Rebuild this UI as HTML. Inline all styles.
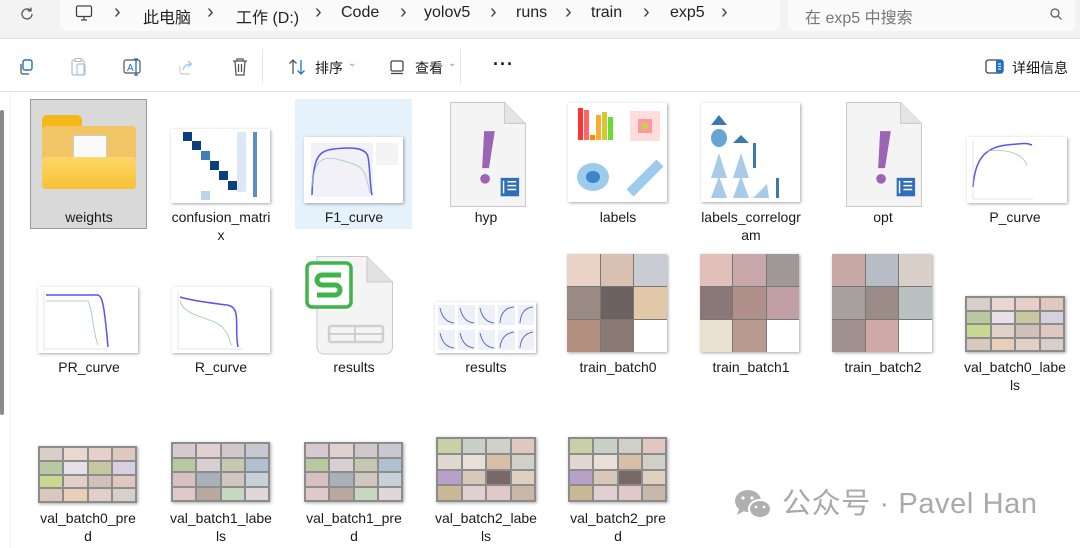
<!DOCTYPE html>
<html><head><meta charset="utf-8"><style>
*{margin:0;padding:0;box-sizing:border-box}
body{width:1080px;height:548px;overflow:hidden;background:#fff;font-family:"Liberation Sans","Noto Sans CJK SC",sans-serif;position:relative;color:#1a1a1a}
.a{position:absolute}
.hdr{left:0;top:0;width:1080px;height:39px;background:#f3f3f3;border-bottom:1px solid #e3e3e3}
.addr{left:60px;top:0;width:720px;height:31px;background:#fafafa;border-radius:0 0 6px 6px}
.srch{left:788px;top:0;width:287px;height:31px;background:#fafafa;border-radius:0 0 6px 6px}
.ht{top:4px;font-size:16px;color:#222}
.chev{top:1px;font-size:20px;color:#444}
.tb{left:0;top:40px;width:1080px;height:52px;background:#fff;border-bottom:1px solid #e3e3e3}
.lbl{font-size:14px;color:#1a1a1a;text-align:center;width:120px;line-height:18px}
.thumb{box-shadow:1px 1px 3px rgba(0,0,0,.35);background:#fff;overflow:hidden}
.g{display:grid;background:#8c8c8c;gap:2px;padding:2px}
.g span{display:block}
.wm{font-size:29px;color:#a9a9a9;left:782px;top:487px;letter-spacing:.6px;line-height:34px}
</style></head><body>
<div class="a hdr"></div>
<div class="a addr"></div>
<div class="a srch"></div>
<svg class="a" style="left:18px;top:5px" width="18" height="18" viewBox="0 0 18 18"><path d="M14 9a5 5 0 1 1-1.5-3.6M13 2.5v3.3H9.7" fill="none" stroke="#555" stroke-width="1.3"/></svg>
<svg class="a" style="left:74px;top:3px" width="20" height="20" viewBox="0 0 20 20"><rect x="2.5" y="3" width="15" height="10.5" rx="1.5" fill="none" stroke="#444" stroke-width="1.3"/><path d="M7 17h6M10 13.5v3.5" stroke="#444" stroke-width="1.3"/></svg>
<div class="a chev" style="left:114px">›</div>
<div class="a ht" style="left:143px">此电脑</div>
<div class="a chev" style="left:207px">›</div>
<div class="a ht" style="left:236px">工作 (D:)</div>
<div class="a chev" style="left:315px">›</div>
<div class="a ht" style="left:341px">Code</div>
<div class="a chev" style="left:400px">›</div>
<div class="a ht" style="left:424px">yolov5</div>
<div class="a chev" style="left:490px">›</div>
<div class="a ht" style="left:516px">runs</div>
<div class="a chev" style="left:565px">›</div>
<div class="a ht" style="left:591px">train</div>
<div class="a chev" style="left:643px">›</div>
<div class="a ht" style="left:670px">exp5</div>
<div class="a chev" style="left:721px">›</div>
<div class="a ht" style="left:805px;color:#777">在 exp5 中搜索</div>
<svg class="a" style="left:1049px;top:7px" width="14" height="14" viewBox="0 0 14 14"><circle cx="6" cy="6" r="4" fill="none" stroke="#555" stroke-width="1.2"/><path d="M9 9l3.5 3.5" stroke="#555" stroke-width="1.2"/></svg>

<div class="a tb"></div>
<svg class="a" style="left:17px;top:58px" width="18" height="18" viewBox="0 0 18 18"><rect x="6" y="2" width="9" height="10" rx="2" fill="none" stroke="#1a73c8" stroke-width="1.4"/><path d="M4 6v8a2 2 0 0 0 2 2h6" fill="none" stroke="#555" stroke-width="1.3"/></svg>
<svg class="a" style="left:70px;top:57px" width="18" height="20" viewBox="0 0 18 20"><rect x="2" y="3" width="12" height="15" rx="2" fill="none" stroke="#bbb" stroke-width="1.2"/><rect x="7" y="7" width="8" height="11" rx="1.5" fill="none" stroke="#9cc7ef" stroke-width="1.2"/><rect x="5" y="1.5" width="6" height="3" fill="#fff" stroke="#bbb"/></svg>
<svg class="a" style="left:122px;top:57px" width="22" height="20" viewBox="0 0 22 20"><rect x="2" y="3" width="16" height="13" rx="2" fill="none" stroke="#555" stroke-width="1.2"/><text x="5" y="14" font-size="10" font-family="Liberation Sans" fill="#1a73c8">A</text><path d="M14 2v16M12 2h4M12 18h4" stroke="#1a73c8" stroke-width="1.3"/></svg>
<svg class="a" style="left:177px;top:58px" width="18" height="18" viewBox="0 0 18 18"><path d="M3 8v6a2 2 0 0 0 2 2h8" fill="none" stroke="#ccc" stroke-width="1.2"/><path d="M6 12c1-4 4-6 8-6M11 3l3.5 3L11 9" fill="none" stroke="#9cc7ef" stroke-width="1.2"/></svg>
<svg class="a" style="left:231px;top:57px" width="18" height="20" viewBox="0 0 18 20"><path d="M2 4h14M6 4V2h6v2M4 4l1 14h8l1-14M7.5 7v8M10.5 7v8" fill="none" stroke="#555" stroke-width="1.3"/></svg>
<div class="a" style="left:262px;top:49px;width:1px;height:34px;background:#e3e3e3"></div>
<svg class="a" style="left:288px;top:58px" width="20" height="18" viewBox="0 0 20 18"><path d="M5 16V2M1.5 5.5L5 2l3.5 3.5" fill="none" stroke="#555" stroke-width="1.3"/><path d="M13 2v14M9.5 12.5L13 16l3.5-3.5" fill="none" stroke="#1a73c8" stroke-width="1.3"/></svg>
<div class="a" style="left:315px;top:58px;font-size:14px">排序</div>
<div class="a" style="left:348px;top:58px;font-size:10px;color:#888">⌄</div>
<svg class="a" style="left:389px;top:59px" width="16" height="16" viewBox="0 0 16 16"><rect x="2" y="2" width="12" height="10" rx="1.5" fill="none" stroke="#444" stroke-width="1.3"/><path d="M2 14.5h12" stroke="#444" stroke-width="1.3"/></svg>
<div class="a" style="left:415px;top:58px;font-size:14px">查看</div>
<div class="a" style="left:448px;top:58px;font-size:10px;color:#888">⌄</div>
<div class="a" style="left:460px;top:49px;width:1px;height:34px;background:#e3e3e3"></div>
<div class="a" style="left:493px;top:54px;font-size:18px;font-weight:bold;letter-spacing:1px">···</div>
<svg class="a" style="left:985px;top:59px" width="19" height="15" viewBox="0 0 19 15"><rect x="1" y="1" width="17" height="13" rx="2.5" fill="none" stroke="#444" stroke-width="1.3"/><rect x="11" y="1" width="7" height="13" rx="2" fill="#1a73c8"/><path d="M13 5h3M13 7.5h3M13 10h3" stroke="#fff"/></svg>
<div class="a" style="left:1012px;top:58px;font-size:14px">详细信息</div>

<div class="a" style="left:0;top:110px;width:4px;height:305px;background:#8a8a8a;border-radius:2px"></div>
<div class="a" style="left:10px;top:93px;width:1px;height:455px;background:#f0f0f0"></div>

<!-- Row 1 -->
<div class="a" style="left:30px;top:99px;width:117px;height:130px;background:#d9d9d9;border:1px solid #9a9a9a"></div>
<div class="a" style="left:295px;top:99px;width:117px;height:130px;background:#e5f1fb"></div>
<div class="a" style="left:42px;top:115px;width:40px;height:20px;background:#f5b818;border-radius:5px 5px 0 0"></div>
<div class="a" style="left:42px;top:126px;width:94px;height:40px;background:#f2c564;border-radius:4px"></div>
<div class="a" style="left:73px;top:135px;width:34px;height:40px;background:#fafafa;border:1px solid #ccc"></div>
<div class="a" style="left:42px;top:157px;width:94px;height:32px;background:linear-gradient(#fdd76a,#f7c133);border-radius:4px"></div>
<div class="a lbl" style="left:29px;top:208px">weights</div>

<div class="a thumb" style="left:171px;top:129px;width:99px;height:74px">
<svg width="99" height="74"><g fill="#0b3f7e"><rect x="12" y="3" width="9" height="9"/><rect x="21" y="12" width="9" height="9"/><rect x="39" y="32" width="9" height="9"/><rect x="48" y="42" width="9" height="9"/><rect x="57" y="52" width="9" height="9"/></g><rect x="30" y="22" width="9" height="9" fill="#3d7fb8"/><rect x="30" y="62" width="9" height="9" fill="#b9d3ea"/><rect x="66" y="3" width="9" height="60" fill="#dce9f5"/><rect x="82" y="3" width="4" height="65" fill="#5c8fc4"/></svg></div>
<div class="a lbl" style="left:161px;top:208px">confusion_matri<br>x</div>

<div class="a thumb" style="left:304px;top:137px;width:99px;height:66px">
<svg width="99" height="66"><rect x="7" y="6" width="62" height="54" fill="#f1f1f7"/><path d="M8 58C9 20 14 14 30 12S62 10 64 20 66 50 68 58" fill="none" stroke="#5555ee" stroke-width="1.5"/><path d="M8 50C10 20 20 18 40 24S60 30 66 56" fill="none" stroke="#9c9" stroke-width=".7"/><rect x="72" y="6" width="22" height="22" fill="#f4f4f4"/></svg></div>
<div class="a lbl" style="left:294px;top:208px">F1_curve</div>

<svg class="a" style="left:449px;top:102px" width="78" height="105" viewBox="0 0 78 108"><path d="M0.5 .5H56L77.5 22V107.5H.5Z" fill="#f4f4f4" stroke="#c8c8c8"/><path d="M56 .5V22H77.5" fill="#e4e4e4" stroke="#c8c8c8"/><path d="M35 30h11l-6 38h-7z" fill="#9b64b4"/><circle cx="36" cy="79" r="5" fill="#9b64b4"/><rect x="52" y="78" width="19" height="19" fill="#2f6fba"/><path d="M55 81v13M59 82h9M59 86h9M59 90h9" stroke="#fff" stroke-width="1.5"/></svg>
<div class="a lbl" style="left:426px;top:208px">hyp</div>

<div class="a thumb" style="left:568px;top:103px;width:99px;height:99px">
<svg width="99" height="99"><rect x="10" y="5" width="5" height="32" fill="#f33"/><rect x="16" y="7" width="5" height="30" fill="#f66"/><rect x="22" y="32" width="5" height="5" fill="#f80"/><rect x="28" y="12" width="5" height="25" fill="#fa3"/><rect x="34" y="9" width="5" height="28" fill="#cc3"/><rect x="40" y="14" width="5" height="23" fill="#6d3"/><rect x="62" y="8" width="30" height="30" fill="#fdd"/><rect x="70" y="16" width="14" height="14" fill="#f99"/><rect x="74" y="20" width="6" height="6" fill="#cc5"/><ellipse cx="25" cy="74" rx="16" ry="14" fill="#9ccbed"/><ellipse cx="25" cy="74" rx="7" ry="6" fill="#3a86c8"/><path d="M62 90L92 60" stroke="#9ccbed" stroke-width="10"/></svg></div>
<div class="a lbl" style="left:558px;top:208px">labels</div>

<div class="a thumb" style="left:701px;top:103px;width:99px;height:99px">
<svg width="99" height="99"><path d="M10 22l8-10 8 10z" fill="#3a7ab0"/><ellipse cx="18" cy="35" rx="8" ry="9" fill="#6aa4d3"/><path d="M32 40l8-8 8 8z" fill="#3a7ab0"/><path d="M10 75l8-25 8 25zM32 75l8-25 8 25zM10 95l8-22 8 22zM32 95l8-22 8 22zM52 95l14-14 2 14z" fill="#a8cbe8"/><path d="M52 65v-25h3v25zM75 95v-20h3v20z" fill="#3a7ab0"/></svg></div>
<div class="a lbl" style="left:691px;top:208px">labels_correlogr<br>am</div>

<svg class="a" style="left:845px;top:102px" width="78" height="105" viewBox="0 0 78 108"><path d="M0.5 .5H56L77.5 22V107.5H.5Z" fill="#f4f4f4" stroke="#c8c8c8"/><path d="M56 .5V22H77.5" fill="#e4e4e4" stroke="#c8c8c8"/><path d="M35 30h11l-6 38h-7z" fill="#9b64b4"/><circle cx="36" cy="79" r="5" fill="#9b64b4"/><rect x="52" y="78" width="19" height="19" fill="#2f6fba"/><path d="M55 81v13M59 82h9M59 86h9M59 90h9" stroke="#fff" stroke-width="1.5"/></svg>
<div class="a lbl" style="left:823px;top:208px">opt</div>

<div class="a thumb" style="left:967px;top:137px;width:100px;height:66px">
<svg width="100" height="66"><path d="M6 50C8 20 20 10 40 8S60 6 65 8" fill="none" stroke="#5555ee" stroke-width="1.5"/><path d="M20 14C40 12 55 16 60 28" fill="none" stroke="#9c9" stroke-width=".8"/><path d="M6 62V4M6 62h60" stroke="#ccc" stroke-width=".5"/></svg></div>
<div class="a lbl" style="left:955px;top:208px">P_curve</div>

<!-- Row 2 -->
<div class="a thumb" style="left:38px;top:287px;width:100px;height:66px">
<svg width="100" height="66"><path d="M8 8H60C64 10 66 14 70 60" fill="none" stroke="#5555ee" stroke-width="1.5"/><path d="M8 14H50C54 20 56 50 60 58" fill="none" stroke="#9c9" stroke-width=".8"/><path d="M6 62V4M6 62h64" stroke="#ccc" stroke-width=".5"/></svg></div>
<div class="a lbl" style="left:29px;top:358px">PR_curve</div>

<div class="a thumb" style="left:172px;top:287px;width:98px;height:66px">
<svg width="98" height="66"><path d="M8 10C20 14 40 16 55 18S62 40 66 60" fill="none" stroke="#5555ee" stroke-width="1.5"/><path d="M8 14C12 30 40 30 50 40S56 55 60 58" fill="none" stroke="#9c9" stroke-width=".8"/><path d="M6 62V4M6 62h64" stroke="#ccc" stroke-width=".5"/></svg></div>
<div class="a lbl" style="left:161px;top:358px">R_curve</div>

<svg class="a" style="left:305px;top:256px" width="88" height="99" viewBox="0 0 88 99"><path d="M12 .5H62L87.5 26V91a7 7 0 0 1-7 7H19a7 7 0 0 1-7-7Z" fill="#f4f4f4" stroke="#c8c8c8"/><path d="M62 .5V26H87.5" fill="#e2e2e2" stroke="#c8c8c8"/><rect x="2" y="7" width="44" height="44" rx="5" fill="#fff" stroke="#3fb44a" stroke-width="3.5"/><path d="M36 19H17a5 5 0 0 0 0 10h13a5 5 0 0 1 0 10H12" fill="none" stroke="#3fb44a" stroke-width="5"/><rect x="24" y="70" width="54" height="16" rx="2" fill="none" stroke="#cfcfcf" stroke-width="2.5"/><path d="M24 78h54M50 70v16" stroke="#cfcfcf" stroke-width="2"/></svg>
<div class="a lbl" style="left:294px;top:358px">results</div>

<div class="a thumb" style="left:435px;top:302px;width:101px;height:51px">
<svg width="101" height="51"><g fill="#eef0f7"><rect x="3" y="3" width="17" height="20"/><rect x="23" y="3" width="17" height="20"/><rect x="43" y="3" width="17" height="20"/><rect x="63" y="3" width="17" height="20"/><rect x="83" y="3" width="16" height="20"/><rect x="3" y="28" width="17" height="20"/><rect x="23" y="28" width="17" height="20"/><rect x="43" y="28" width="17" height="20"/><rect x="63" y="28" width="17" height="20"/><rect x="83" y="28" width="16" height="20"/></g><g fill="none" stroke="#5a75b5" stroke-width="1"><path d="M5 6Q8 20 19 21M25 6Q28 20 39 21M45 6Q48 20 59 21M65 21Q66 6 79 5M85 21Q86 6 98 5M5 31Q8 45 19 46M25 31Q28 45 39 46M45 31Q48 45 59 46M65 46Q66 32 79 30M85 46Q86 32 98 30"/></g></svg></div>
<div class="a lbl" style="left:426px;top:358px">results</div>

<div class="a thumb g" style="left:567px;top:254px;width:100px;height:98px;grid-template-columns:1fr 1fr 1fr;grid-template-rows:1fr 1fr 1fr;gap:1px;padding:0;background:#777">
<span style="background:#e9d3c6"></span><span style="background:#d8c0b2"></span><span style="background:#c9ccd3"></span>
<span style="background:#9a8a84"></span><span style="background:#6e6260"></span><span style="background:#e0c8a8"></span>
<span style="background:#b49080"></span><span style="background:#8a7a74"></span><span style="background:#fff"></span></div>
<div class="a lbl" style="left:558px;top:358px">train_batch0</div>

<div class="a thumb g" style="left:700px;top:254px;width:99px;height:98px;grid-template-columns:1fr 1fr 1fr;grid-template-rows:1fr 1fr 1fr;gap:1px;padding:0;background:#777">
<span style="background:#e0c0b8"></span><span style="background:#c8a8a8"></span><span style="background:#a09898"></span>
<span style="background:#8a7878"></span><span style="background:#b0908a"></span><span style="background:#c0a0a4"></span>
<span style="background:#e8e0d0"></span><span style="background:#b89a90"></span><span style="background:#fff"></span></div>
<div class="a lbl" style="left:691px;top:358px">train_batch1</div>

<div class="a thumb g" style="left:832px;top:254px;width:100px;height:98px;grid-template-columns:1fr 1fr 1fr;grid-template-rows:1fr 1fr 1fr;gap:1px;padding:0;background:#777">
<span style="background:#c8a8a4"></span><span style="background:#b8bcc4"></span><span style="background:#d8d0c8"></span>
<span style="background:#a8a0a0"></span><span style="background:#9c8c88"></span><span style="background:#b8c0c0"></span>
<span style="background:#a09090"></span><span style="background:#d0a8a8"></span><span style="background:#fff"></span></div>
<div class="a lbl" style="left:823px;top:358px">train_batch2</div>

<div class="a thumb g" style="left:965px;top:296px;width:100px;height:56px;grid-template-columns:repeat(4,1fr);grid-template-rows:repeat(4,1fr)">
<span style="background:#d8d0c8"></span><span style="background:#e8d8d0"></span><span style="background:#e8d0c8"></span><span style="background:#e0c8c0"></span>
<span style="background:#b8c8a0"></span><span style="background:#e8e0e8"></span><span style="background:#c8c8a0"></span><span style="background:#d8d0e0"></span>
<span style="background:#c8d890"></span><span style="background:#e0d0c8"></span><span style="background:#d0c0b8"></span><span style="background:#e0c8c0"></span>
<span style="background:#d8c8c0"></span><span style="background:#e8d0b8"></span><span style="background:#e0d0c8"></span><span style="background:#d8d0c8"></span></div>
<div class="a lbl" style="left:955px;top:358px">val_batch0_labe<br>ls</div>

<!-- Row 3 -->
<div class="a thumb g" style="left:38px;top:446px;width:99px;height:57px;grid-template-columns:repeat(4,1fr);grid-template-rows:repeat(4,1fr)">
<span style="background:#d8d0c8"></span><span style="background:#e8d8d0"></span><span style="background:#e8d0c8"></span><span style="background:#e0c8c0"></span>
<span style="background:#b8c8a0"></span><span style="background:#e8e0e8"></span><span style="background:#c8c8a0"></span><span style="background:#d8d0e0"></span>
<span style="background:#c8d890"></span><span style="background:#e0d0c8"></span><span style="background:#d0c0b8"></span><span style="background:#e0c8c0"></span>
<span style="background:#d8c8c0"></span><span style="background:#e8d0b8"></span><span style="background:#e0d0c8"></span><span style="background:#d8d0c8"></span></div>
<div class="a lbl" style="left:28px;top:509px">val_batch0_pre<br>d</div>

<div class="a thumb g" style="left:171px;top:442px;width:99px;height:60px;grid-template-columns:repeat(4,1fr);grid-template-rows:repeat(4,1fr)">
<span style="background:#d8c8d0"></span><span style="background:#e0d0d0"></span><span style="background:#d0c8c8"></span><span style="background:#c8c8d0"></span>
<span style="background:#b8c8a0"></span><span style="background:#d8d0d0"></span><span style="background:#c8c8b0"></span><span style="background:#b0c0d0"></span>
<span style="background:#d8c0c0"></span><span style="background:#a8b0b8"></span><span style="background:#d0c8c0"></span><span style="background:#c8d0d8"></span>
<span style="background:#e0c8c8"></span><span style="background:#b8a8a0"></span><span style="background:#c8d8c0"></span><span style="background:#e0d8d8"></span></div>
<div class="a lbl" style="left:161px;top:509px">val_batch1_labe<br>ls</div>

<div class="a thumb g" style="left:304px;top:442px;width:99px;height:60px;grid-template-columns:repeat(4,1fr);grid-template-rows:repeat(4,1fr)">
<span style="background:#d8c8d0"></span><span style="background:#e0d0d0"></span><span style="background:#d0c8c8"></span><span style="background:#c8c8d0"></span>
<span style="background:#b8c8a0"></span><span style="background:#d8d0d0"></span><span style="background:#c8c8b0"></span><span style="background:#b0c0d0"></span>
<span style="background:#d8c0c0"></span><span style="background:#a8b0b8"></span><span style="background:#d0c8c0"></span><span style="background:#c8d0d8"></span>
<span style="background:#e0c8c8"></span><span style="background:#b8a8a0"></span><span style="background:#c8d8c0"></span><span style="background:#e0d8d8"></span></div>
<div class="a lbl" style="left:294px;top:509px">val_batch1_pre<br>d</div>

<div class="a thumb g" style="left:436px;top:437px;width:100px;height:65px;grid-template-columns:repeat(4,1fr);grid-template-rows:repeat(4,1fr)">
<span style="background:#c8d0a8"></span><span style="background:#c8d0c8"></span><span style="background:#d0d0c8"></span><span style="background:#e0c8c0"></span>
<span style="background:#e0d8d0"></span><span style="background:#e8e0d8"></span><span style="background:#d8c0a8"></span><span style="background:#d0d0c8"></span>
<span style="background:#b8a0c8"></span><span style="background:#d8c8b8"></span><span style="background:#7a6868"></span><span style="background:#e0d0c0"></span>
<span style="background:#c8b898"></span><span style="background:#e0d0d0"></span><span style="background:#e0c8c8"></span><span style="background:#c8b8a8"></span></div>
<div class="a lbl" style="left:426px;top:509px">val_batch2_labe<br>ls</div>

<div class="a thumb g" style="left:568px;top:437px;width:99px;height:65px;grid-template-columns:repeat(4,1fr);grid-template-rows:repeat(4,1fr)">
<span style="background:#c8d0a8"></span><span style="background:#c8d0c8"></span><span style="background:#d0d0c8"></span><span style="background:#e0c8c0"></span>
<span style="background:#e0d8d0"></span><span style="background:#e8e0d8"></span><span style="background:#d8c0a8"></span><span style="background:#d0d0c8"></span>
<span style="background:#b8a0c8"></span><span style="background:#d8c8b8"></span><span style="background:#7a6868"></span><span style="background:#e0d0c0"></span>
<span style="background:#c8b898"></span><span style="background:#e0d0d0"></span><span style="background:#e0c8c8"></span><span style="background:#c8b8a8"></span></div>
<div class="a lbl" style="left:558px;top:509px">val_batch2_pre<br>d</div>

<svg class="a" style="left:733px;top:488px" width="40" height="34" viewBox="0 0 40 34"><ellipse cx="15" cy="13" rx="13" ry="11" fill="#b0b0b0"/><path d="M6 21l-2 6 7-4z" fill="#b0b0b0"/><ellipse cx="27" cy="21" rx="11" ry="9" fill="#b0b0b0" stroke="#fff" stroke-width="2"/><circle cx="10" cy="10" r="1.6" fill="#fff"/><circle cx="19" cy="10" r="1.6" fill="#fff"/><circle cx="23" cy="19" r="1.3" fill="#fff"/><circle cx="31" cy="19" r="1.3" fill="#fff"/></svg>
<div class="a wm">公众号 · Pavel Han</div>
</body></html>
